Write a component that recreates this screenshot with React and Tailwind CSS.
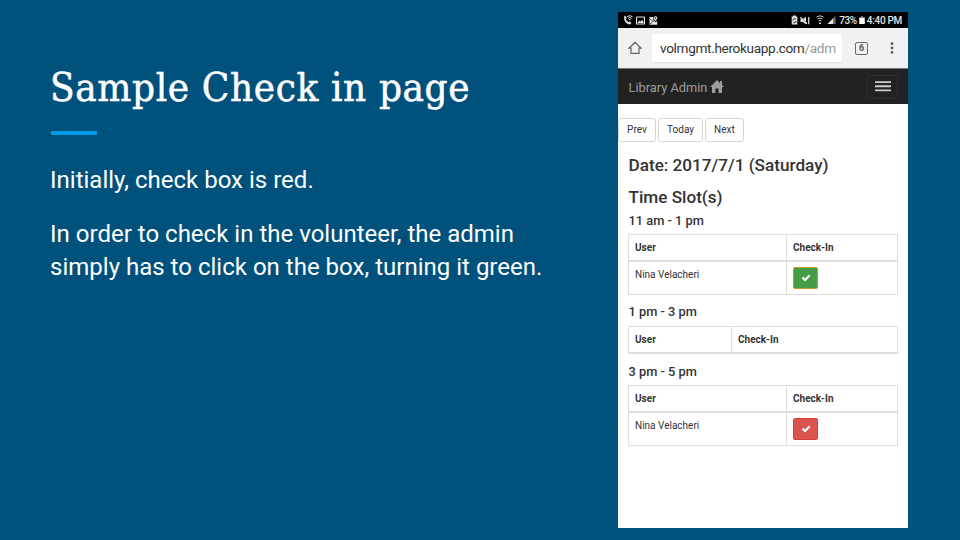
import React from "react";

const bodyFont = "font-['Roboto','Liberation_Sans',sans-serif]";
const titleFont = "font-['Roboto_Slab','DejaVu_Serif_Condensed','DejaVu_Serif',serif]";

function StatusBar() {
  return (
    <div className="flex h-4 items-center bg-black pl-[5px] pr-[6px] text-[#e4e4e4]">
      <svg className="h-[10px] w-[10px]" viewBox="0 0 10 10" fill="none" stroke="currentColor">
        <path d="M1.2 1.4 2.7.8 3.6 2.9 2.7 3.8C3.2 5.4 4.2 6.5 5.5 7.2L6.5 6.5 8.3 7.8 7.4 9.2C3.4 9.2.5 5.5 1.2 1.4Z" fill="currentColor" strokeWidth="0.2" />
        <path d="M4.2 1.5Q7-.3 9.5 1.8M5 3.2Q6.9 2 8.6 3.4M6.2 4.7 7 4.3 7.7 4.9" strokeWidth="1" />
      </svg>
      <svg className="ml-[3px] h-[9px] w-[9px]" viewBox="0 0 9 9">
        <rect x=".5" y="1" width="8" height="7" rx=".5" fill="none" stroke="currentColor" strokeWidth="1.2" />
        <path d="M1.5 7 3.3 4.4 4.6 5.6 6.2 3.7 7.8 7Z" fill="currentColor" />
      </svg>
      <svg className="ml-1 h-[9px] w-[9px]" viewBox="0 0 9 9">
        <path d="M.5 1H4.5V4L6.5 6.2 8.2 5V8.7H.5Z" fill="currentColor" />
        <path d="M6.5 0A2 2 0 0 1 8.5 2C8.5 3.3 6.5 5.2 6.5 5.2S4.5 3.3 4.5 2A2 2 0 0 1 6.5 0Z" fill="currentColor" stroke="#000" strokeWidth=".4" />
        <circle cx="6.5" cy="2" r=".7" />
        <path d="M1 2.5 3.5 5M1 8 5 4.7" stroke="#000" strokeWidth=".7" />
      </svg>
      <div className="ml-auto flex items-center">
        <svg className="h-[10px] w-[7px]" viewBox="0 0 7 10">
          <path d="M2 .5H5V1.5H6.3V9.5H.7V1.5H2Z" fill="currentColor" />
          <path d="M2 5.4A1.6 1.6 0 0 1 5 4.5M5 6A1.6 1.6 0 0 1 2 6.9" fill="none" stroke="#000" strokeWidth=".8" />
        </svg>
        <svg className="ml-[2px] h-[9px] w-[10px]" viewBox="0 0 10 9">
          <path d="M.5 3H2.8L6 .7V8.3L2.8 6H.5Z" fill="currentColor" />
          <path d="M.8 1 7.8 8" stroke="#000" strokeWidth="1" />
          <path d="M.3 1.2 7 7.8M8.7 1V8.2" stroke="currentColor" strokeWidth="1.2" />
        </svg>
        <svg className="ml-[6px] h-[10px] w-[8px]" viewBox="0 0 8 10" fill="none" stroke="currentColor">
          <path d="M.5 2Q4-.5 7.5 2M1.7 3.9Q4 2.5 6.3 3.9M2.8 5.8Q4 5 5.2 5.8" strokeWidth=".9" />
          <path d="M4 6.7V9M3 8 4 9 5 8" strokeWidth=".8" />
        </svg>
        <svg className="ml-[3px] h-[8px] w-[9px]" viewBox="0 0 9 8">
          <path d="M8.5 0V8H.5Z" fill="#777" />
          <path d="M6 2.5V8H.5Z" fill="currentColor" />
        </svg>
        <span className="ml-[3px] pt-px text-[10px] font-medium leading-[15px] tracking-[-0.4px]">73%</span>
        <svg className="ml-[2px] h-[8px] w-[6px]" viewBox="0 0 6 9">
          <path d="M1.8 0H4.2V1H6V9H0V1H1.8Z" fill="#777" />
          <path d="M0 2.3H6V9H0Z" fill="#fff" />
        </svg>
        <span className="ml-[2px] whitespace-nowrap pt-px text-[10px] font-medium leading-[15px] tracking-[-0.3px]">4:40 PM</span>
      </div>
    </div>
  );
}

function AddressBar() {
  return (
    <div className="flex h-10 items-center bg-[#f1f1f1] pl-[10px] pr-[12px]">
      <svg className="h-[14px] w-[14px]" viewBox="0 0 14 14" fill="none" stroke="#666" strokeWidth="1.2">
        <path d="M7 1.3 1 7.2H3V12.4H11V7.2H13Z" />
      </svg>
      <div className="ml-[10px] flex h-7 w-[190px] items-center overflow-hidden whitespace-nowrap rounded-[2px] bg-white pl-[8px] pt-px text-[13.6px] tracking-[-0.33px] text-[#333] shadow-[0_1px_1px_#ddd]">
        volmgmt.herokuapp.com<span className="text-[#999]">/adm</span>
      </div>
      <div className="ml-auto flex h-[13px] w-[13px] items-center justify-center rounded-[2px] border-[1.5px] border-[#6b6b6b] text-[9px] font-bold leading-none text-[#555]">6</div>
      <svg className="ml-[20px] h-[12px] w-[8px]" viewBox="0 0 8 12" fill="#5c5c5c">
        <circle cx="4" cy="1.7" r="1.4" />
        <circle cx="4" cy="6" r="1.4" />
        <circle cx="4" cy="10.3" r="1.4" />
      </svg>
    </div>
  );
}

function NavBar() {
  return (
    <div className="flex h-9 items-center border-t border-[#777] bg-[#222] pl-[10.5px] pr-[10px]">
      <span className="whitespace-nowrap pt-[2px] text-[12.8px] text-[#9d9d9d]">Library Admin</span>
      <svg className="ml-[3px] h-[13px] w-[14px]" viewBox="0 0 14 13" fill="#9d9d9d">
        <path d="M7 0 10 2.9V1H12V4.9L14 7H12V13H8.6V8.5H5.4V13H2V7H0Z" />
      </svg>
      <div className="ml-auto flex h-6 w-[31px] items-center justify-center rounded-[3px] border border-[#2e2e2e]">
        <svg className="h-3 w-4" viewBox="0 0 16 12" fill="#ccc">
          <path d="M0 .2H16V2H0ZM0 4.3H16V6.3H0ZM0 8.5H16V10.3H0Z" />
        </svg>
      </div>
    </div>
  );
}

function Button({ width, children }) {
  return (
    <button className={`flex h-6 ${width} items-center justify-center rounded-[3px] border border-[#d6d6d6] bg-white pb-[2px] text-[10px] tracking-[0.05px] text-[#333]`}>
      {children}
    </button>
  );
}

function CheckButton({ color }) {
  return (
    <span className={`flex h-[22px] w-[25px] items-center justify-center rounded-[2px] border ${color}`}>
      <svg className="h-[8px] w-[10px]" viewBox="0 0 10 8">
        <path d="M.7 4.2 2.3 2.8 4 4.4 8 .5 9.5 2 4 7.5Z" fill="#fff" />
      </svg>
    </span>
  );
}

function Slot({ time, spacing, tableGap = "mt-[7px]", userWidth, color }) {
  return (
    <div className={spacing}>
      <h4 className="h-[14px] pl-[0.5px] text-[12.8px] font-medium leading-[14px]">{time}</h4>
      <div className={`${tableGap} w-[270px] border border-[#dedede] text-[10px]`}>
        <div className={`flex font-bold ${color ? "h-[27px] border-b-2" : "h-[26px] border-b"} border-[#dedede]`}>
          <div className={`${userWidth} border-r border-[#dedede] pl-[6px] leading-[25px]`}>User</div>
          <div className="pl-[6px] leading-[25px]">Check-In</div>
        </div>
        {color && (
          <div className="flex h-8">
            <div className={`${userWidth} border-r border-[#dedede] pl-[6px] pt-[4.5px] leading-4`}>Nina Velacheri</div>
            <div className="pl-[6px] pt-[5px]"><CheckButton color={color} /></div>
          </div>
        )}
      </div>
    </div>
  );
}

export default function App() {
  return (
    <main className={`flex h-[540px] w-[960px] overflow-hidden bg-[#00517c] ${bodyFont}`}>
      <section className="w-[618px] shrink-0 pl-[50px] pt-[60px] text-white">
        <h1 className={`h-[54px] whitespace-nowrap text-[40px] leading-[54px] tracking-[0.62px] [-webkit-text-stroke:0.5px_white] ${titleFont}`}>Sample Check in page</h1>
        <div className="ml-[1px] mt-[16.5px] h-1 w-[46px] bg-[#039be5]" />
        <p className="mt-[29.5px] whitespace-nowrap text-[24px] leading-[33px] tracking-[0.01px]">Initially, check box is red.</p>
        <p className="mt-[21px] whitespace-nowrap text-[24px] leading-[33px] tracking-[0.01px]">
          In order to check in the volunteer, the admin
          <br />
          simply has to click on the box, turning it green.
        </p>
      </section>
      <section className="mt-3 h-[516px] w-[290px] shrink-0 bg-white text-[#333]">
        <StatusBar />
        <AddressBar />
        <NavBar />
        <div className="mt-[14px] flex gap-[2px]">
          <Button width="w-[38px]">Prev</Button>
          <Button width="w-[45px]">Today</Button>
          <Button width="w-[39px]">Next</Button>
        </div>
        <div className="pl-[10px]">
          <h3 className="mt-[13px] h-5 whitespace-nowrap pl-[0.5px] text-[17.15px] font-medium leading-5">Date: 2017/7/1 (Saturday)</h3>
          <h3 className="mt-[12px] h-5 pl-[0.5px] text-[17.15px] font-medium leading-5">Time Slot(s)</h3>
          <Slot time="11 am - 1 pm" spacing="mt-[7px]" tableGap="mt-[6px]" userWidth="w-[158px]" color="border-[#c49a2c] bg-[#449d44]" />
          <Slot time="1 pm - 3 pm" spacing="mt-[10px]" userWidth="w-[103px]" />
          <Slot time="3 pm - 5 pm" spacing="mt-[11px]" tableGap="mt-[6px]" userWidth="w-[158px]" color="border-[#d43f3a] bg-[#d9534f]" />
        </div>
      </section>
    </main>
  );
}
